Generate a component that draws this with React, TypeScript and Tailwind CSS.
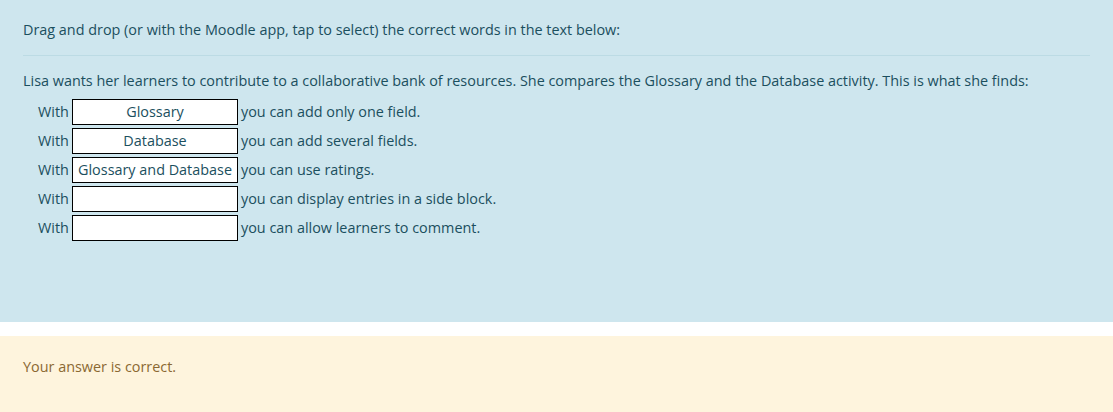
import React from 'react';

const rows = [
  { answer: 'Glossary', rest: 'you can add only one field.' },
  { answer: 'Database', rest: 'you can add several fields.' },
  { answer: 'Glossary and Database', rest: 'you can use ratings.' },
  { answer: '', rest: 'you can display entries in a side block.' },
  { answer: '', rest: 'you can allow learners to comment.' },
];

const App = () => {
  return (
    <div className="w-[1113px] h-[412px] overflow-hidden bg-white text-[14.4px] font-['Open_Sans',sans-serif]">
      {/* Question formulation */}
      <div className="bg-[#cee6ee] text-[#1b4f5e] px-[23px] pt-[20px] h-[322px]">
        <div className="pb-[15px] border-b border-[#bcdbe4] leading-[20px]">
          Drag and drop (or with the Moodle app, tap to select) the correct words in the text below:
        </div>
        <p className="mt-[15px] leading-[20px]">
          Lisa wants her learners to contribute to a collaborative bank of resources. She compares the Glossary and the Database activity. This is what she finds:
        </p>
        <div className="mt-[8px] pl-[15px] flex flex-col gap-[3px]">
          {rows.map((r, i) => (
            <div key={i} className="flex items-center h-[26px]">
              <span className="w-[34px]">With</span>
              <span className="w-[166px] h-[26px] bg-white border border-black text-center leading-[24px] whitespace-nowrap">
                {r.answer}
              </span>
              <span className="ml-[3px]">{r.rest}</span>
            </div>
          ))}
        </div>
      </div>

      {/* Feedback */}
      <div className="mt-[14px] bg-[#fef4dd] text-[#8b6832] px-[23px] pt-[21px] h-[80px] leading-[20px]">
        Your answer is correct.
      </div>
    </div>
  );
};

export default App;
